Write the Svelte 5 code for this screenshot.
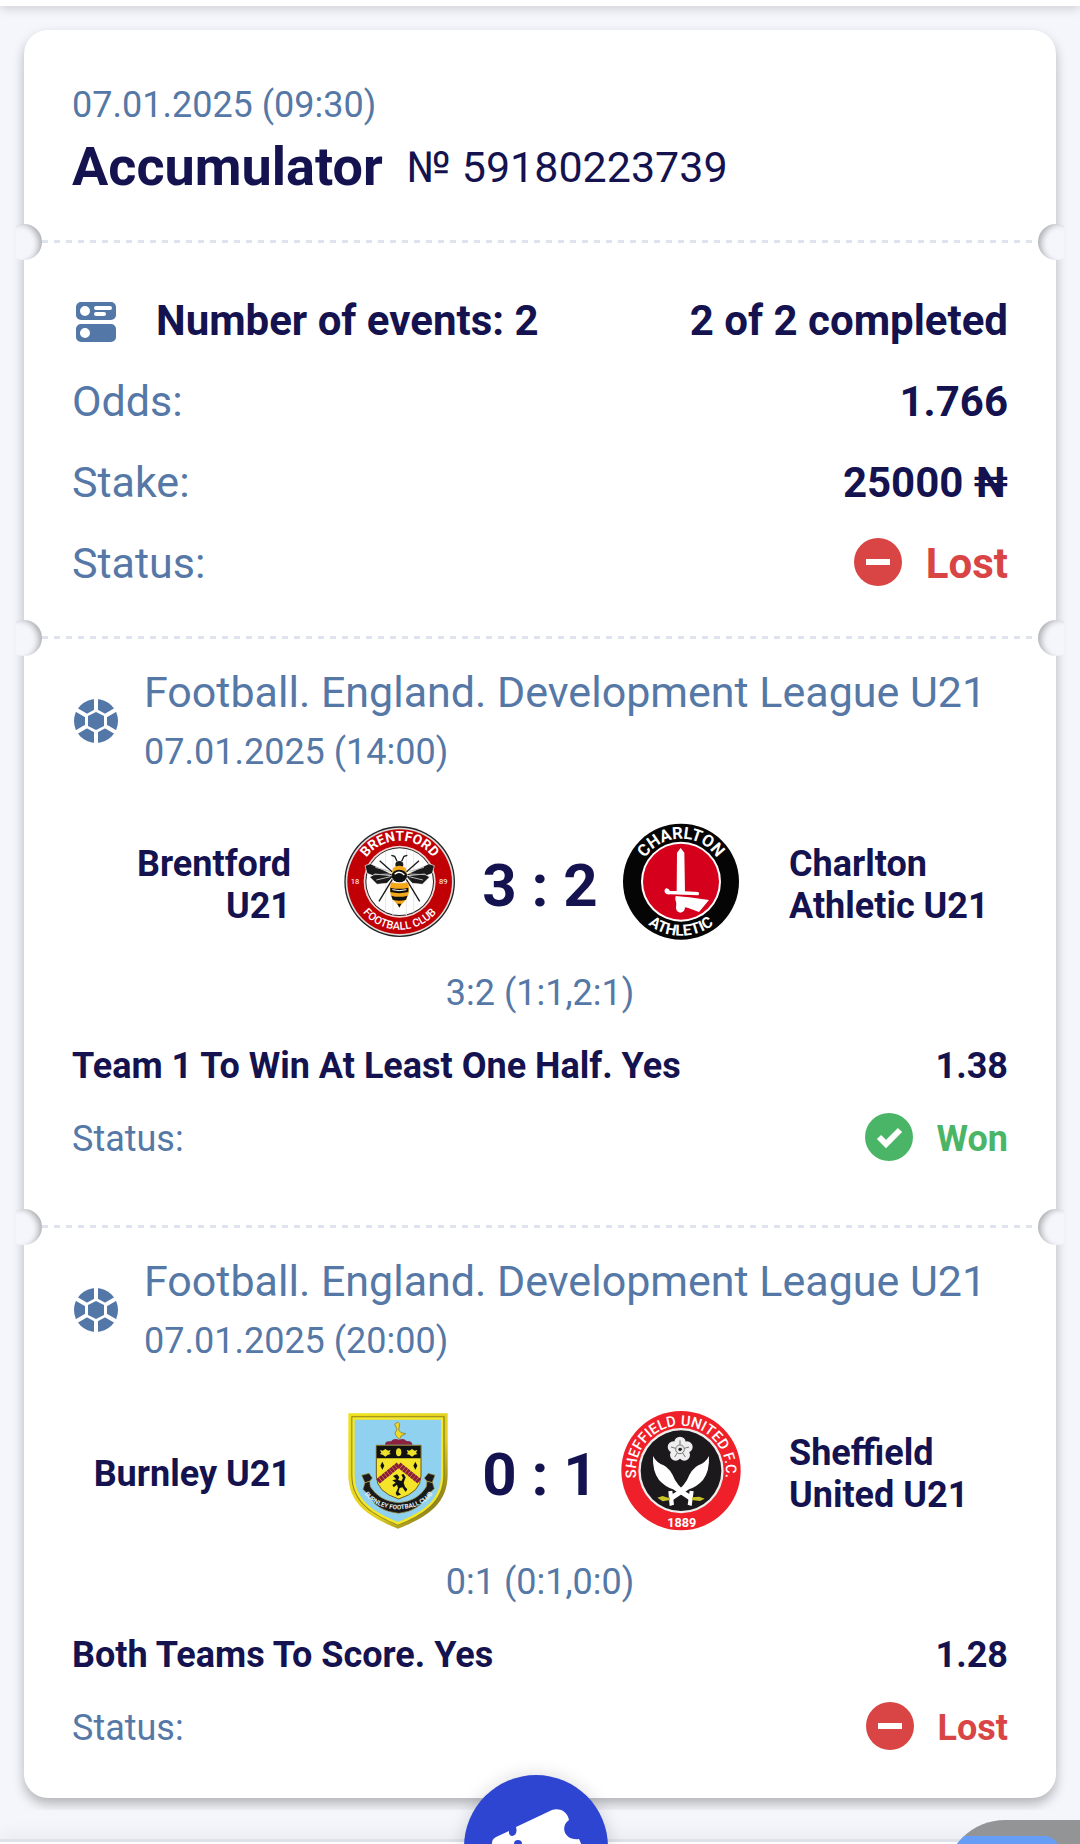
<script>
  const summary = [
    { label: "Odds:", value: "1.766" },
    { label: "Stake:", value: "25000 ₦" },
  ];

  const events = [
    {
      league: "Football. England. Development League U21",
      date: "07.01.2025 (14:00)",
      home: { name: "Brentford U21", crest: brentford },
      away: { name: "Charlton Athletic U21", crest: charlton },
      score: "3 : 2",
      periods: "3:2 (1:1,2:1)",
      market: "Team 1 To Win At Least One Half. Yes",
      odds: "1.38",
      status: "Won",
    },
    {
      league: "Football. England. Development League U21",
      date: "07.01.2025 (20:00)",
      home: { name: "Burnley U21", crest: burnley },
      away: { name: "Sheffield United U21", crest: sheffield },
      score: "0 : 1",
      periods: "0:1 (0:1,0:0)",
      market: "Both Teams To Score. Yes",
      odds: "1.28",
      status: "Lost",
    },
  ];
</script>

{#snippet statusBadge(status)}
  <span class="status" class:won={status === "Won"}>
    <svg class="status-icon" viewBox="0 0 48 48" aria-hidden="true">
      <circle cx="24" cy="24" r="24" fill="currentColor" />
      {#if status === "Won"}
        <path d="M14 24l7 7 14-14" fill="none" stroke="#fff" stroke-width="6" />
      {:else}
        <path d="M12 21h24v6H12z" fill="#fff" />
      {/if}
    </svg>
    {status}
  </span>
{/snippet}

{#snippet brentford()}
  <svg class="crest" viewBox="30 36 360 360" role="img" aria-label="Brentford">
    <defs>
      <path id="brentford-top" d="M89 215a123 123 0 0 1 246 0" />
      <path id="brentford-bottom" d="M68 215a144 144 0 0 0 288 0" />
    </defs>
    <circle cx="212" cy="215" r="166" fill="#222" />
    <circle cx="212" cy="215" r="162" fill="#ddd" />
    <circle cx="212" cy="215" r="157" fill="#c10005" />
    <circle cx="212" cy="215" r="108" fill="#f5d5d3" />
    <circle cx="212" cy="215" r="103" fill="#222" />
    <circle cx="212" cy="215" r="100" fill="#fff" />
    <path d="M170 127v180M192 117v200M232 117v200M254 127v180" stroke="#e7e7e7" stroke-width="3" />
    <g fill="#fff" font-weight="700" text-anchor="middle">
      <text font-size="41"><textPath href="#brentford-top" startOffset="50%">BRENTFORD</textPath></text>
      <text font-size="33" font-weight="500">
        <textPath href="#brentford-bottom" startOffset="50%">FOOTBALL CLUB</textPath>
      </text>
      <text x="78" y="223" font-size="23" font-weight="400">18</text>
      <text x="343" y="223" font-size="23" font-weight="400">89</text>
    </g>
    <g fill="none" stroke="#1a1a1a" stroke-width="4">
      <path d="M204 154l-7-15-10-3M218 154l7-15 10-3M190 186l-38-34M232 186l38-34M190 208l-40 66M232 208l40 66" />
    </g>
    <g fill="#1a1a1a" stroke="#fff" stroke-width="2">
      <path d="M196 196l-72-35-16 6 6 23 30 12zM228 196l72-35 16 6-6 23-30 12z" />
      <path d="M194 198l-56-6-16 9 22 22 30-3zM230 198l56-6 16 9-22 22-30-3z" />
    </g>
    <path d="M183 184l-44-12M183 192l-48 2M184 200l-42 10M241 184l44-12M241 192l48 2M240 200l42 10" stroke="#bbb" stroke-width="3" />
    <ellipse cx="211" cy="164" rx="12" ry="11" fill="#1a1a1a" />
    <path d="M192 174q19-14 38 0l4 20h-46z" fill="#f5a81c" />
    <ellipse cx="211" cy="198" rx="23" ry="19" fill="#111" />
    <path d="M197 193q14-13 29 2" fill="none" stroke="#fff" stroke-width="4" />
    <path d="M186 216q25 8 51 0 8 32-5 52l-21 23-20-23q-13-20-5-52z" fill="#f5a81c" />
    <path d="M184 233q27 7 54 0v13q-27 7-54 0zM187 257q24 7 48 0l-4 12q-20 6-40 0z" fill="#111" />
    <path d="M190 239q20 6 42 0" fill="none" stroke="#fff" stroke-width="3" />
    <path d="M205 281h12l-6 12z" fill="#111" />
  </svg>
{/snippet}

{#snippet charlton()}
  <svg class="crest" viewBox="36 36 360 360" role="img" aria-label="Charlton Athletic">
    <defs>
      <path id="charlton-top" d="M87 215a129 129 0 0 1 258 0" />
      <path id="charlton-bottom" d="M54 215a162 162 0 0 0 324 0" />
    </defs>
    <circle cx="216" cy="215" r="174" fill="#050505" />
    <circle cx="216" cy="215" r="120" fill="#fff" />
    <circle cx="216" cy="215" r="114" fill="#d5001c" />
    <g fill="#fff" font-weight="700" text-anchor="middle">
      <text font-size="50"><textPath href="#charlton-top" startOffset="50%">CHARLTON</textPath></text>
      <text font-size="46"><textPath href="#charlton-bottom" startOffset="50%">ATHLETIC</textPath></text>
    </g>
    <path
      d="M215 114L204 128L203 243L183 243Q179 234 171 235Q164 240 168 248Q172 254 182 253L268 256Q273 252 268 246L228 244L226 128Z"
      fill="#fff"
    />
    <path
      d="M200 258L240 262L300 270L270 306L238 294L228 292Q228 306 214 308Q202 306 201 294L202 280Q196 268 200 258Z"
      fill="#fff"
    />
  </svg>
{/snippet}

{#snippet burnley()}
  <svg class="crest" viewBox="30 33 360 360" role="img" aria-label="Burnley">
    <defs>
      <linearGradient id="burnley-edge" x1="0" y1="0" x2="1" y2="1">
        <stop offset="0" stop-color="#efe21c" />
        <stop offset=".6" stop-color="#e2cf25" />
        <stop offset="1" stop-color="#5c5414" />
      </linearGradient>
      <path id="burnley-ribbon" d="M108 284Q142 326 208 328Q276 326 310 284" />
    </defs>
    <path d="M58 40h298v184c0 92-70 130-149 162C128 354 58 316 58 224z" fill="url(#burnley-edge)" />
    <path d="M67 49h280v175c0 86-66 122-140 152C133 346 67 310 67 224z" fill="#8f8222" />
    <path d="M70 52h273v172c0 84-64 120-136 150C135 344 70 308 70 224z" fill="#f4e726" />
    <path d="M77 59h259v165c0 80-60 113-129 142C138 337 77 304 77 224z" fill="#8fd1ef" />
    <path
      d="M197 72L206 66L212 72L209 90L216 98L230 101L216 108L212 118L203 110L198 100L204 88Z"
      fill="#efd92b"
      stroke="#806c18"
      stroke-width="2"
    />
    <path d="M168 134Q168 122 186 124Q194 114 210 119Q226 114 232 123Q250 122 250 134Z" fill="#8b2340" />
    <path d="M142 136H276V228Q276 276 209 297Q142 276 142 228Z" fill="#f5e52a" stroke="#6c5820" stroke-width="3" />
    <path d="M143 138H275V175H143Z" fill="#111" />
    <g fill="#efe02b">
      <path d="M153 150l8 2 8-5 8 5 8-2-4 9 5 3-9 2-8 6-8-6-9-2 5-3zM233 150l8 2 8-5 8 5 8-2-4 9 5 3-9 2-8 6-8-6-9-2 5-3z" />
      <ellipse cx="209" cy="157" rx="8" ry="12" />
    </g>
    <path d="M147 244L209 194L271 244" fill="none" stroke="#8b1c3d" stroke-width="17" stroke-dasharray="9 1" />
    <path d="M160 185l6 12-6 12-6-12zM259 185l6 12-6 12-6-12z" fill="#111" />
    <path
      d="M192 228L204 223L211 232L207 240L217 243L222 234L217 224L224 222L230 232L224 248L228 260L235 268L230 276L220 262L212 264L208 276L216 284L204 287L200 280L207 264L204 254L194 262L190 255L200 248L190 241L202 238Z"
      fill="#111"
    />
    <path
      d="M98 226L120 220L130 234L122 244L124 260Q152 304 209 308Q266 304 292 260L294 244L286 234L298 220L318 226L310 246L316 266L300 280Q272 334 209 340Q142 334 116 282L102 268L108 248Z"
      fill="#1a1a1a"
      stroke="#a4913e"
      stroke-width="2"
    />
    <path d="M108 248l16-5M292 243l18 5" stroke="#a4913e" stroke-width="3" />
    <text fill="#dff1fa" font-size="19" font-weight="700" text-anchor="middle">
      <textPath href="#burnley-ribbon" startOffset="50%">BURNLEY FOOTBALL CLUB</textPath>
    </text>
  </svg>
{/snippet}

{#snippet sheffield()}
  <svg class="crest" viewBox="36 33 360 360" role="img" aria-label="Sheffield United">
    <defs>
      <path id="sheffield-top" d="M88 255a135 135 0 1 1 256 0" />
    </defs>
    <circle cx="216" cy="212" r="179" fill="#ef2029" />
    <circle cx="216" cy="212" r="128" fill="#eee" />
    <circle cx="216" cy="212" r="121" fill="#1b191b" />
    <g fill="#fff" text-anchor="middle">
      <text font-size="44" font-weight="500">
        <textPath href="#sheffield-top" startOffset="50%">SHEFFIELD UNITED F.C.</textPath>
      </text>
      <text x="218" y="381" font-size="38" font-weight="700">1889</text>
    </g>
    <g fill="#eee">
      <circle cx="213" cy="127" r="17" />
      <circle cx="193" cy="141" r="17" />
      <circle cx="200" cy="165" r="17" />
      <circle cx="226" cy="165" r="17" />
      <circle cx="234" cy="141" r="17" />
    </g>
    <g fill="none" stroke="#777" stroke-width="3">
      <circle cx="213" cy="148" r="13" />
      <path d="M213 135v-14M226 145l14-4M221 159l8 12M205 159l-8 12M200 145l-14-4" />
    </g>
    <g fill="#fff">
      <path d="M132 168Q130 214 150 240Q168 260 192 268L240 300L248 286Q216 270 198 240Q184 206 164 196Q142 188 132 168Z" />
      <path d="M300 168Q302 214 282 240Q264 260 240 268L192 300L184 286Q216 270 234 240Q248 206 268 196Q290 188 300 168Z" />
      <path d="M178 274L190 272L195 314L182 318ZM242 272L254 274L248 318L236 314Z" />
    </g>
    <path d="M145 293l16-5 16 5 6-2v9l-22 4zM249 292l22-2 16 6-14 7-24-3z" fill="#c8c22b" />
  </svg>
{/snippet}

<header class="topbar"></header>

<main>
  <article class="ticket">
    <header class="ticket-header">
      <time>07.01.2025 (09:30)</time>
      <div class="ticket-title">
        <h1>Accumulator</h1>
        <span>№ 59180223739</span>
      </div>
    </header>

    <div class="divider"></div>

    <section class="summary">
      <div class="row total">
        <svg class="icon" viewBox="0 0 48 48" aria-hidden="true">
          <path
            fill="currentColor"
            fill-rule="evenodd"
            d="M9 5h30a5 5 0 0 1 5 5v8a5 5 0 0 1-5 5H9a5 5 0 0 1-5-5v-8a5 5 0 0 1 5-5zm4 4a5 5 0 1 0 0 10 5 5 0 0 0 0-10zm11 0a2 2 0 0 0 0 4h14a2 2 0 0 0 0-4zm0 6a2 2 0 0 0 0 4h8a2 2 0 0 0 0-4zM9 27h30a5 5 0 0 1 5 5v8a5 5 0 0 1-5 5H9a5 5 0 0 1-5-5v-8a5 5 0 0 1 5-5zm4 4a5 5 0 1 0 0 10 5 5 0 0 0 0-10z"
          />
        </svg>
        <strong>Number of events: 2</strong>
        <strong class="value">2 of 2 completed</strong>
      </div>
      {#each summary as item}
        <div class="row">
          <span>{item.label}</span>
          <strong class="value">{item.value}</strong>
        </div>
      {/each}
      <div class="row">
        <span>Status:</span>
        {@render statusBadge("Lost")}
      </div>
    </section>

    {#each events as event}
      <div class="divider"></div>

      <section class="event">
        <div class="event-header">
          <svg class="icon" viewBox="0 0 48 48" aria-hidden="true">
            <circle cx="24" cy="24" r="22" fill="currentColor" />
            <path
              d="M24 0v14M24 34v14M24 14l9 5v10l-9 5-9-5V19zM33 19l12-7M33 29l12 7M15 19L3 12M15 29L3 36"
              fill="none"
              stroke="#fff"
              stroke-width="4"
            />
            <path d="M24 15l8 4v10l-8 4-8-4V19z" fill="currentColor" />
          </svg>
          <div class="event-title">
            <h2>{event.league}</h2>
            <time>{event.date}</time>
          </div>
        </div>

        <div class="teams">
          <strong class="team home">{event.home.name}</strong>
          <div class="scoreboard">
            {@render event.home.crest()}
            <strong class="score">{event.score}</strong>
            {@render event.away.crest()}
          </div>
          <strong class="team">{event.away.name}</strong>
        </div>
        <p class="periods">{event.periods}</p>

        <div class="row">
          <strong>{event.market}</strong>
          <strong class="value">{event.odds}</strong>
        </div>
        <div class="row">
          <span>Status:</span>
          {@render statusBadge(event.status)}
        </div>
      </section>
    {/each}
  </article>
</main>

<nav class="bottombar">
  <button class="fab" aria-label="Bet slip">
    <svg viewBox="0 0 144 144" aria-hidden="true">
      <path
        d="M28 68q0-4 4-6l13-6c-1 8 10 6 7-4l36-17c6-2 15 0 17 10-9 6-5 21 10 19l8 18q3 7-4 10l-54 25q-8 3-12-5L27 72z"
        fill="#fff"
      />
      <circle cx="54" cy="69" r="4" fill="#2e45d1" />
      <circle cx="60" cy="82" r="4" fill="#2e45d1" />
    </svg>
  </button>
</nav>

<aside class="widget"><div class="widget-screen"></div></aside>

<style>
  :global(body) {
    margin: 0;
    background: #f4f6fb;
    color: #14134f;
    font-family: Roboto, "Liberation Sans", sans-serif;
    font-size: 36px;
  }

  h1,
  h2,
  p {
    margin: 0;
    font-weight: 400;
  }

  strong {
    font-weight: 700;
  }

  svg {
    display: block;
    flex: none;
  }

  .topbar {
    height: 6px;
    background: #fff;
    box-shadow: 0 0 12px rgba(0, 0, 0, 0.3);
  }

  main {
    padding: 24px 24px 12px;
    overflow: hidden;
  }

  .ticket {
    background: #fff;
    border-radius: 24px;
    box-shadow: 0 6px 12px rgba(0, 0, 0, 0.27);
  }

  .ticket-header {
    padding: 51px 48px 33px;
  }

  time {
    display: block;
    color: #5578a6;
    line-height: 48px;
  }

  .ticket-title {
    display: flex;
    align-items: center;
    gap: 24px;
    font-size: 43px;
    line-height: 76px;
    padding-bottom: 2px;
  }

  h1 {
    font-size: 54px;
    font-weight: 700;
  }

  .divider {
    position: relative;
    height: 3px;
    margin: 0 18px;
    background: repeating-linear-gradient(90deg, #dfe3ee 0 6px, transparent 6px 12px);
  }

  .divider::before,
  .divider::after {
    content: "";
    position: absolute;
    top: -16px;
    width: 36px;
    height: 36px;
    border-radius: 50%;
    background: #f4f6fb;
  }

  .divider::before {
    left: -36px;
    box-shadow: inset -6px 2px 6px -3px rgba(0, 0, 0, 0.3);
    clip-path: inset(0 0 0 10px);
  }

  .divider::after {
    right: -36px;
    box-shadow: inset 6px 2px 6px -3px rgba(0, 0, 0, 0.3);
    clip-path: inset(0 10px 0 0);
  }

  .summary {
    padding: 37px 48px 32px;
    font-size: 42px;
  }

  .row {
    display: flex;
    align-items: center;
    height: 73px;
  }

  .summary .row {
    height: 81px;
  }

  .row > span:first-child {
    color: #5578a6;
  }

  .summary .row > span:first-child {
    padding-bottom: 2px;
    font-size: 43px;
  }

  .total {
    gap: 36px;
  }

  .value,
  .status {
    margin-left: auto;
  }

  .status {
    display: flex;
    align-items: center;
    gap: 24px;
    color: #d94545;
    font-weight: 700;
  }

  .status.won {
    color: #4ab567;
  }

  .icon,
  .status-icon {
    width: 48px;
    height: 48px;
  }

  .status-icon {
    margin-bottom: 3px;
  }

  .icon {
    color: #5378a8;
  }

  .event {
    padding: 21px 48px 50px;
  }

  .event:last-child {
    padding-bottom: 34px;
  }

  .event-header {
    display: flex;
    align-items: center;
    gap: 24px;
  }

  .event-title {
    padding-top: 4px;
  }

  h2 {
    padding-bottom: 2px;
    color: #5578a6;
    font-size: 43px;
    line-height: 56px;
  }

  .event-title time {
    line-height: 60px;
  }

  .teams {
    display: grid;
    grid-template-columns: minmax(0, 1fr) auto minmax(0, 1fr);
    align-items: center;
    gap: 48px;
    margin-top: 40px;
    padding: 0 12px;
  }

  .team {
    padding-top: 5px;
    line-height: 42px;
  }

  .home {
    text-align: right;
  }

  .scoreboard {
    display: flex;
    align-items: center;
  }

  .crest {
    width: 120px;
    height: 120px;
  }

  .score {
    width: 162px;
    padding-top: 6px;
    font-size: 60px;
    text-align: center;
  }

  .periods {
    margin-top: 15px;
    color: #5578a6;
    line-height: 72px;
    text-align: center;
  }

  .bottombar {
    position: fixed;
    right: 0;
    bottom: 0;
    left: 0;
    height: 2px;
    border-top: 3px solid #dde2ea;
    background: #fff;
    box-shadow: 0 0 18px rgba(0, 0, 0, 0.15);
  }

  .fab {
    position: absolute;
    top: -67px;
    left: calc(50% - 76px);
    width: 144px;
    height: 144px;
    padding: 0;
    border: 0;
    border-radius: 50%;
    background: #2e45d1;
    box-shadow: 0 0 18px rgba(0, 0, 0, 0.15);
  }

  .widget {
    position: fixed;
    right: -60px;
    bottom: -176px;
    width: 195px;
    height: 200px;
    border-radius: 60px;
    background: #929496;
    overflow: hidden;
  }

  .widget-screen {
    width: 115px;
    height: 168px;
    margin-top: 16px;
    border-radius: 0 16px 16px 0;
    background: #669ef7;
  }
</style>
